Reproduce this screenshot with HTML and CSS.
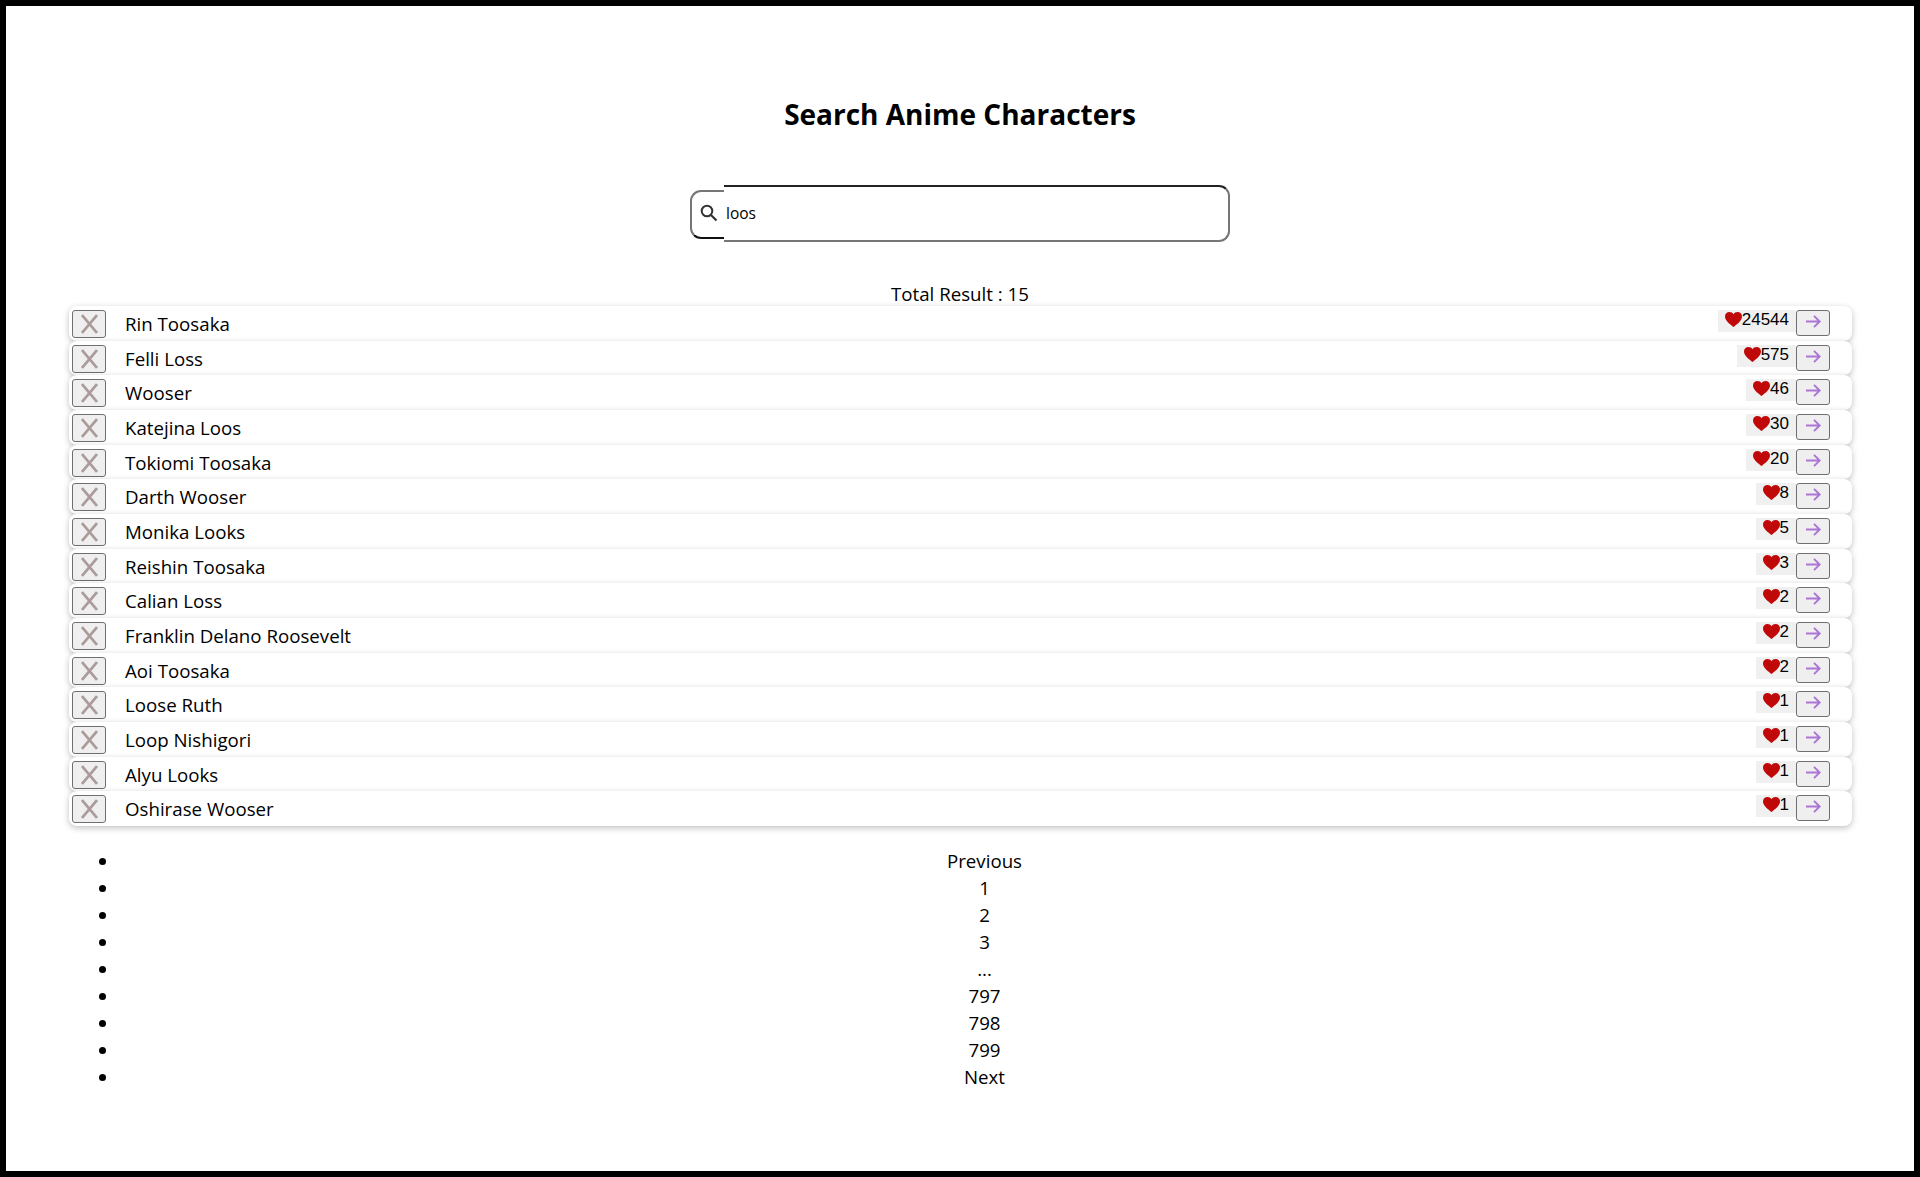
FILE: index.html
```html
<!DOCTYPE html>
<html lang="en">
<head>
    <meta charset="UTF-8"/>
    <title>Search Anime Characters</title>
    <link rel="stylesheet" href="styles.css">
</head>
<body>
    <svg class="icon-defs" width="0" height="0">
        <symbol id="cross" viewBox="0 0 17 20"><path d="M1 1 L16 19 M16 1 L1 19" fill="none" stroke="currentColor" stroke-width="2.7"/></symbol>
        <symbol id="arrow" viewBox="0 0 15 13"><path d="M0 6.5 H13.5 M8 .8 L13.7 6.5 L8 12.2" fill="none" stroke="currentColor" stroke-width="1.9"/></symbol>
        <symbol id="heart" viewBox="0 0 17 15"><path d="M8.5 15 C6 12.6 0 9 0 4.4 C0 1.8 2 0 4.4 0 C6.2 0 7.7 .9 8.5 2.3 C9.3 .9 10.8 0 12.6 0 C15 0 17 1.8 17 4.4 C17 9 11 12.6 8.5 15 Z" fill="currentColor"/></symbol>
    </svg>
    <div class="container">
        <h1>Search Anime Characters</h1>
        <div class="search">
            <span class="search-icon">
                <svg width="18" height="18" viewBox="0 0 18 18"><circle cx="7" cy="7" r="5.3" fill="none" stroke="#333" stroke-width="2"/><path d="M11 11 L16.5 16.5" stroke="#333" stroke-width="2.2"/></svg>
            </span>
            <input type="text" class="search-input" value="loos">
        </div>
        <p class="total">Total Result : 15</p>
        <div class="results">
            <div class="row"><button class="btn-x"><svg><use href="#cross"/></svg></button><span class="name">Rin Toosaka</span><span class="likes"><svg class="heart"><use href="#heart"/></svg>24544</span><button class="btn-go"><svg><use href="#arrow"/></svg></button></div>
            <div class="row"><button class="btn-x"><svg><use href="#cross"/></svg></button><span class="name">Felli Loss</span><span class="likes"><svg class="heart"><use href="#heart"/></svg>575</span><button class="btn-go"><svg><use href="#arrow"/></svg></button></div>
            <div class="row"><button class="btn-x"><svg><use href="#cross"/></svg></button><span class="name">Wooser</span><span class="likes"><svg class="heart"><use href="#heart"/></svg>46</span><button class="btn-go"><svg><use href="#arrow"/></svg></button></div>
            <div class="row"><button class="btn-x"><svg><use href="#cross"/></svg></button><span class="name">Katejina Loos</span><span class="likes"><svg class="heart"><use href="#heart"/></svg>30</span><button class="btn-go"><svg><use href="#arrow"/></svg></button></div>
            <div class="row"><button class="btn-x"><svg><use href="#cross"/></svg></button><span class="name">Tokiomi Toosaka</span><span class="likes"><svg class="heart"><use href="#heart"/></svg>20</span><button class="btn-go"><svg><use href="#arrow"/></svg></button></div>
            <div class="row"><button class="btn-x"><svg><use href="#cross"/></svg></button><span class="name">Darth Wooser</span><span class="likes"><svg class="heart"><use href="#heart"/></svg>8</span><button class="btn-go"><svg><use href="#arrow"/></svg></button></div>
            <div class="row"><button class="btn-x"><svg><use href="#cross"/></svg></button><span class="name">Monika Looks</span><span class="likes"><svg class="heart"><use href="#heart"/></svg>5</span><button class="btn-go"><svg><use href="#arrow"/></svg></button></div>
            <div class="row"><button class="btn-x"><svg><use href="#cross"/></svg></button><span class="name">Reishin Toosaka</span><span class="likes"><svg class="heart"><use href="#heart"/></svg>3</span><button class="btn-go"><svg><use href="#arrow"/></svg></button></div>
            <div class="row"><button class="btn-x"><svg><use href="#cross"/></svg></button><span class="name">Calian Loss</span><span class="likes"><svg class="heart"><use href="#heart"/></svg>2</span><button class="btn-go"><svg><use href="#arrow"/></svg></button></div>
            <div class="row"><button class="btn-x"><svg><use href="#cross"/></svg></button><span class="name">Franklin Delano Roosevelt</span><span class="likes"><svg class="heart"><use href="#heart"/></svg>2</span><button class="btn-go"><svg><use href="#arrow"/></svg></button></div>
            <div class="row"><button class="btn-x"><svg><use href="#cross"/></svg></button><span class="name">Aoi Toosaka</span><span class="likes"><svg class="heart"><use href="#heart"/></svg>2</span><button class="btn-go"><svg><use href="#arrow"/></svg></button></div>
            <div class="row"><button class="btn-x"><svg><use href="#cross"/></svg></button><span class="name">Loose Ruth</span><span class="likes"><svg class="heart"><use href="#heart"/></svg>1</span><button class="btn-go"><svg><use href="#arrow"/></svg></button></div>
            <div class="row"><button class="btn-x"><svg><use href="#cross"/></svg></button><span class="name">Loop Nishigori</span><span class="likes"><svg class="heart"><use href="#heart"/></svg>1</span><button class="btn-go"><svg><use href="#arrow"/></svg></button></div>
            <div class="row"><button class="btn-x"><svg><use href="#cross"/></svg></button><span class="name">Alyu Looks</span><span class="likes"><svg class="heart"><use href="#heart"/></svg>1</span><button class="btn-go"><svg><use href="#arrow"/></svg></button></div>
            <div class="row"><button class="btn-x"><svg><use href="#cross"/></svg></button><span class="name">Oshirase Wooser</span><span class="likes"><svg class="heart"><use href="#heart"/></svg>1</span><button class="btn-go"><svg><use href="#arrow"/></svg></button></div>
        </div>
        <ul class="pagination">
            <li>Previous</li>
            <li>1</li>
            <li>2</li>
            <li>3</li>
            <li>...</li>
            <li>797</li>
            <li>798</li>
            <li>799</li>
            <li>Next</li>
        </ul>
    </div>
</body>
</html>
```

FILE: styles.css
```css
* {
    margin: 0;
    padding: 0;
    box-sizing: border-box;
}
html, body {
    height: 100%;
    background-color: #ffffff;
}
body {
    font-family: "Open Sans", "Noto Sans", sans-serif;
    font-size: 18.7px;
    color: #000000;
    overflow: hidden;
}
.icon-defs {
    position: absolute;
}
.container {
    height: 1177px;
    border: 6px solid #000000;
    padding: 87px 63px 0;
}
h1 {
    font-size: 28px;
    font-weight: 700;
    line-height: 42px;
    text-align: center;
}
.search {
    display: flex;
    justify-content: center;
    align-items: flex-start;
    height: 57px;
    margin-top: 50px;
}
.search-icon {
    display: flex;
    align-items: center;
    flex-shrink: 0;
    margin-top: 5px;
    padding: 0 0 3px 8px;
    width: 34px;
    height: 49px;
    border: 2px solid #767676;
    border-right: none;
    border-bottom-color: #111111;
    border-radius: 11px 0 0 11px;
}
.search-input {
    width: 506px;
    height: 57px;
    padding: 0 2px 2px;
    border: 2px solid #767676;
    border-left: none;
    border-top-color: #222222;
    border-radius: 0 11px 11px 0;
    font-family: inherit;
    font-size: 15.5px;
    outline: none;
}
.total {
    margin-top: 40px;
    line-height: 24px;
    text-align: center;
}
.results {
    width: 1783px;
}
.row {
    display: flex;
    align-items: flex-start;
    height: 34.67px;
    padding: 4px 22px 0 3px;
    border-radius: 8px;
    background-color: #ffffff;
    box-shadow: 0 2px 6px rgba(0, 0, 0, 0.25);
    position: relative;
}
.row button {
    display: flex;
    justify-content: center;
    align-items: center;
    flex-shrink: 0;
    width: 34px;
    background-color: #efefef;
    border: 1px solid #6f6f6f;
    border-radius: 3px;
}
.btn-x {
    height: 28px;
    color: #ab9b9b;
}
.btn-x svg {
    width: 17px;
    height: 20px;
}
.btn-go {
    height: 26px;
    color: #ab74d6;
}
.btn-go svg {
    width: 15px;
    height: 13px;
    margin-bottom: 3px;
}
.name {
    flex: 1;
    padding-left: 19px;
    line-height: 28px;
}
.likes {
    display: flex;
    align-items: center;
    height: 22px;
    padding: 0 7px 2px;
    background-color: #f0f0f0;
    font-family: "Liberation Sans", Arial, sans-serif;
    font-size: 17px;
}
.heart {
    width: 17px;
    height: 15px;
    margin-bottom: 1px;
    color: #c00808;
}
.pagination {
    margin-top: 21px;
    padding-left: 50px;
    width: 1781px;
}
.pagination li {
    height: 27px;
    line-height: 27px;
    text-align: center;
}
```
